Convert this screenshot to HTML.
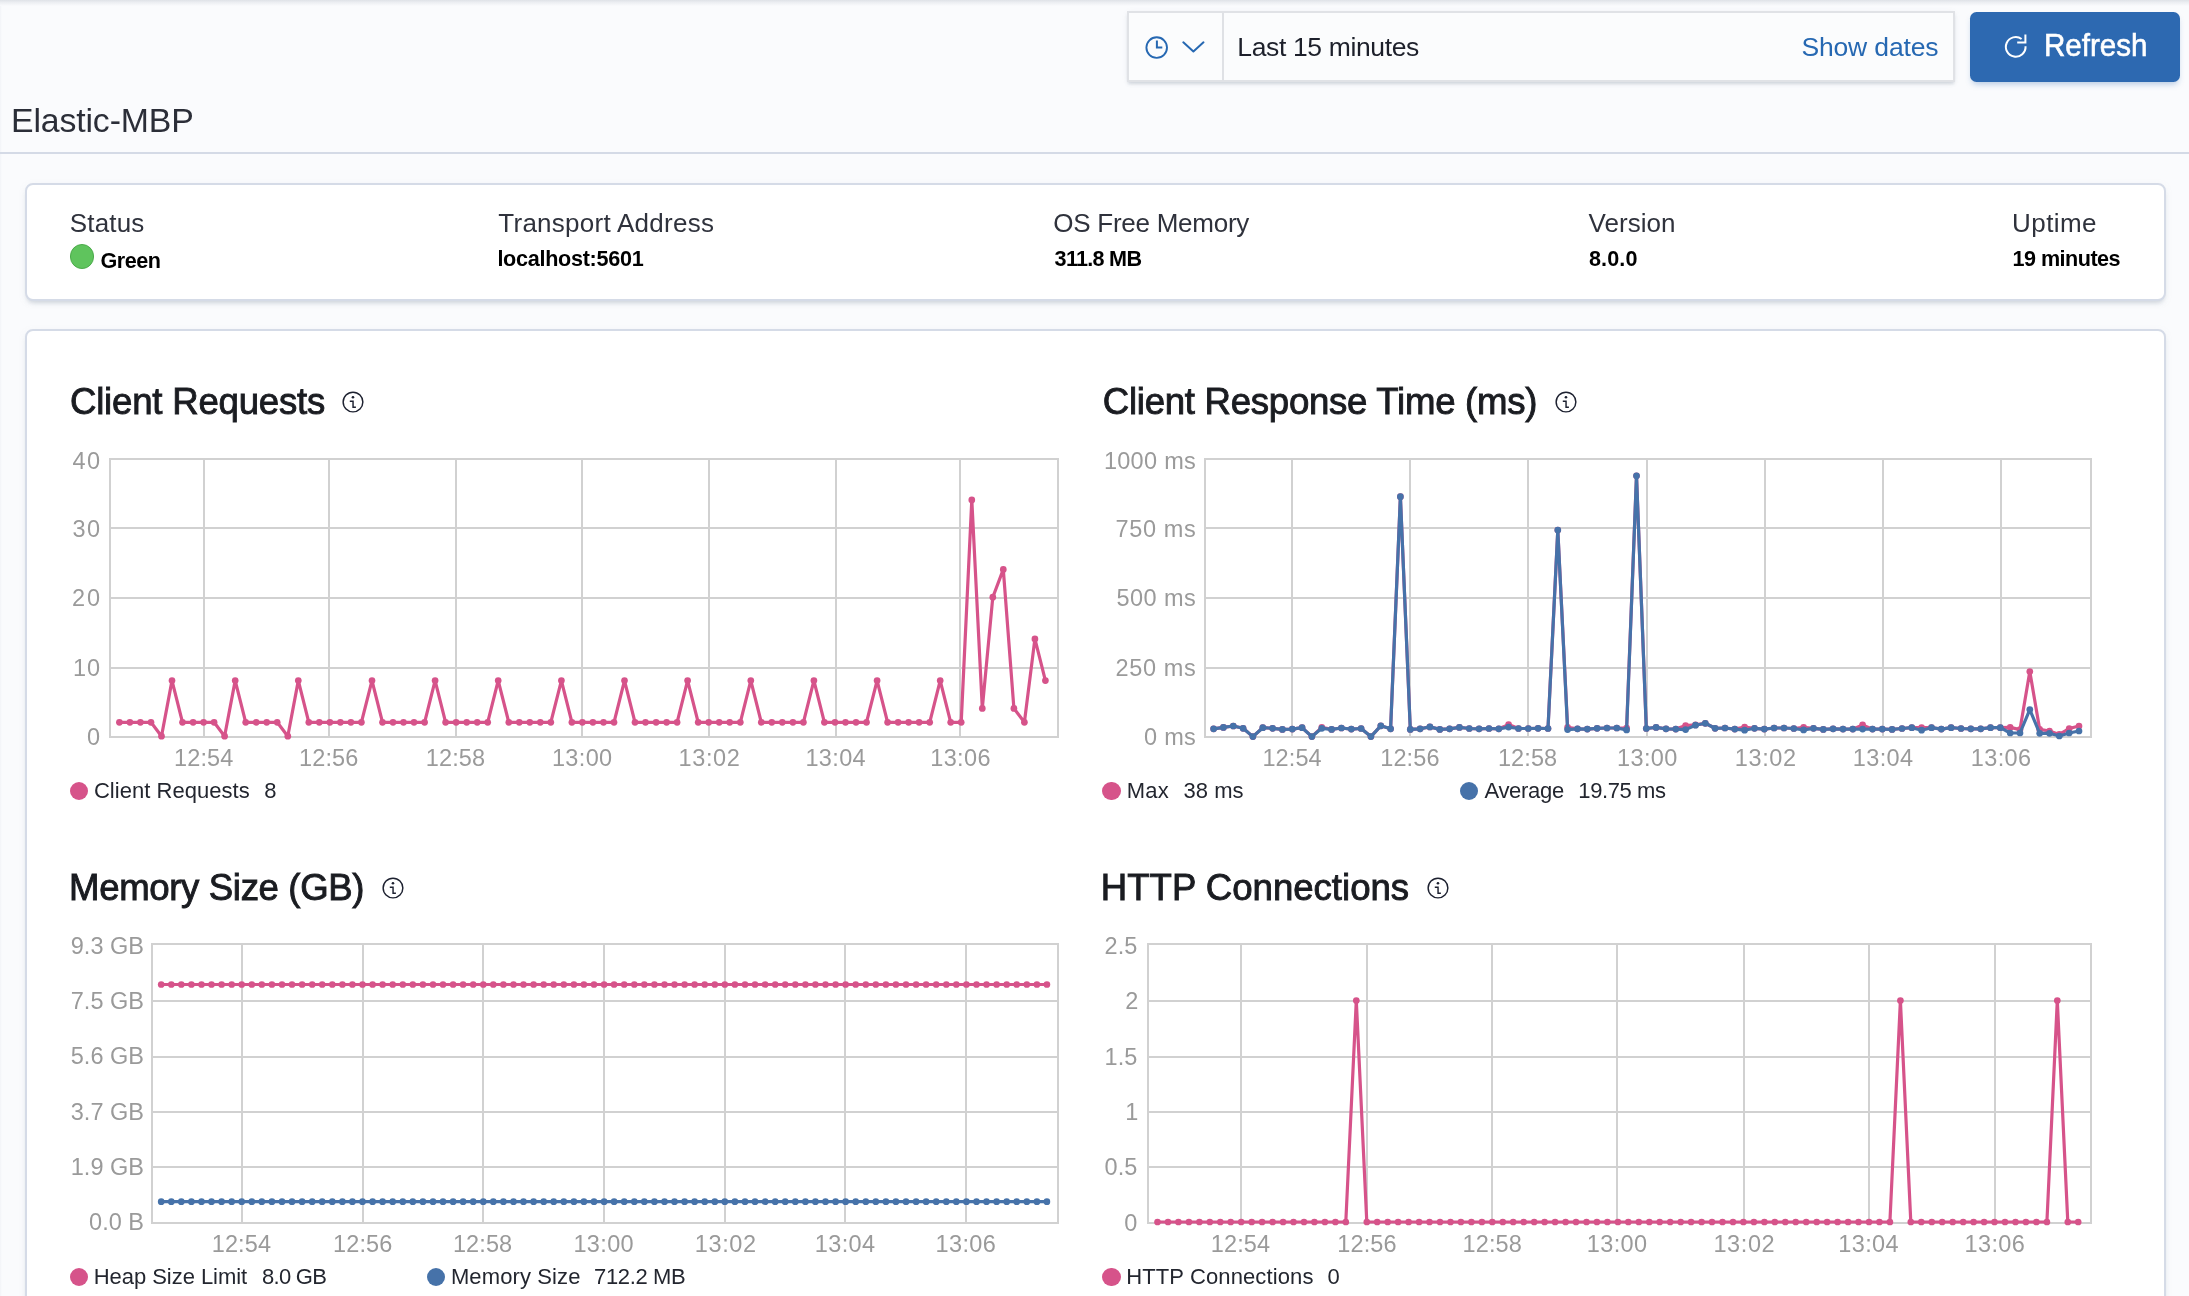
<!DOCTYPE html>
<html lang="en"><head><meta charset="utf-8"><title>Elastic-MBP - Kibana Monitoring</title>
<style>
html,body{margin:0;padding:0;width:2189px;height:1296px;overflow:hidden}
body{width:2189px;height:1296px;overflow:hidden;background:#fafbfd;font-family:"Liberation Sans", sans-serif;position:relative}
.t{position:absolute;white-space:pre;line-height:1;font-family:"Liberation Sans", sans-serif}
.abs{position:absolute}
.dot{position:absolute;border-radius:50%;display:block}
.panel{position:absolute;background:#fff;border:2px solid #d5dbe7;border-radius:8px;box-sizing:border-box;
  box-shadow:0 4px 4px -2px rgba(152,162,179,.35),0 2px 10px -4px rgba(152,162,179,.35)}
#root{position:relative;width:2189px;height:1296px;overflow:hidden;background:#fafbfd}
</style></head><body>
<div id="root">
<div class="abs" style="left:0;top:0;width:2px;height:1296px;background:linear-gradient(90deg,#f2f4f8,#fafbfd)"></div>
<div class="abs" style="left:0;top:0;width:2189px;height:6px;background:linear-gradient(#dfe2e7,#eceef2 40%,#fafbfd)"></div>

<!-- date picker -->
<div class="abs" style="left:1127px;top:11px;width:828px;height:71px;box-sizing:border-box;border:2px solid #e0e2e6;background:#fbfcfd;box-shadow:0 3px 3px -1px rgba(152,162,179,.35),0 1px 6px -2px rgba(152,162,179,.3)"></div>
<div class="abs" style="left:1221.6px;top:12px;width:2px;height:69px;background:#dfe1e5"></div>
<svg class="abs" style="left:1140px;top:30px" width="72" height="36" viewBox="0 0 72 36" fill="none" stroke="#2668b2" stroke-width="2" stroke-linecap="round" stroke-linejoin="round">
<circle cx="16.7" cy="17.6" r="10.3" stroke-width="1.9"/><path d="M16.9 10.6V17.6H22.3" stroke-linecap="butt" stroke-linejoin="miter"/>
<path d="M43.3 12.3L53.4 21.4L63.5 12.3"/></svg>

<!-- refresh button -->
<div class="abs" style="left:1969.6px;top:11.5px;width:210.2px;height:70.6px;border-radius:6.5px;background:#2d69b1;box-shadow:0 4px 6px -2px rgba(45,105,177,.35)"></div>
<svg class="abs" style="left:2000px;top:30px" width="32" height="32" viewBox="0 0 32 32" fill="none" stroke="#fff" stroke-width="2">
<path d="M25.55 16.3A9.85 9.85 0 1 1 21.6 9.0"/><path d="M25.4 4.4V12.5H17.2"/></svg>

<!-- title rule -->
<div class="abs" style="left:0;top:152px;width:2189px;height:2px;background:#d4dae6"></div>

<!-- status panel -->
<div class="panel" style="left:24.8px;top:183px;width:2141.2px;height:118px"></div>
<i class="dot" style="left:69.7px;top:243.8px;width:24.8px;height:24.8px;background:#5fc45d;box-sizing:border-box;border:1.5px solid #4cab4b"></i>

<!-- charts panel -->
<div class="panel" style="left:24.8px;top:328.7px;width:2141.2px;height:1000px"></div>

<svg class="abs" style="left:0;top:0" width="2189" height="1296" viewBox="0 0 2189 1296">
<g stroke="#d1d1d1" stroke-width="2" fill="none" shape-rendering="crispEdges"><line x1="110" x2="1058" y1="528" y2="528"/><line x1="110" x2="1058" y1="598" y2="598"/><line x1="110" x2="1058" y1="668" y2="668"/><line x1="204" x2="204" y1="459" y2="737"/><line x1="329" x2="329" y1="459" y2="737"/><line x1="456" x2="456" y1="459" y2="737"/><line x1="582" x2="582" y1="459" y2="737"/><line x1="709" x2="709" y1="459" y2="737"/><line x1="836" x2="836" y1="459" y2="737"/><line x1="960" x2="960" y1="459" y2="737"/><rect x="110" y="459" width="948" height="278" fill="none"/></g><path d="M119.4 722.3 L129.9 722.3 L140.4 722.3 L151.0 722.3 L161.5 736.2 L172.0 680.6 L182.5 722.3 L193.1 722.3 L203.6 722.3 L214.1 722.3 L224.6 736.2 L235.2 680.6 L245.7 722.3 L256.2 722.3 L266.7 722.3 L277.2 722.3 L287.8 736.2 L298.3 680.6 L308.8 722.3 L319.3 722.3 L329.9 722.3 L340.4 722.3 L350.9 722.3 L361.4 722.3 L372.0 680.6 L382.5 722.3 L393.0 722.3 L403.5 722.3 L414.0 722.3 L424.6 722.3 L435.1 680.6 L445.6 722.3 L456.1 722.3 L466.7 722.3 L477.2 722.3 L487.7 722.3 L498.2 680.6 L508.8 722.3 L519.3 722.3 L529.8 722.3 L540.3 722.3 L550.8 722.3 L561.4 680.6 L571.9 722.3 L582.4 722.3 L592.9 722.3 L603.5 722.3 L614.0 722.3 L624.5 680.6 L635.0 722.3 L645.5 722.3 L656.1 722.3 L666.6 722.3 L677.1 722.3 L687.6 680.6 L698.2 722.3 L708.7 722.3 L719.2 722.3 L729.7 722.3 L740.3 722.3 L750.8 680.6 L761.3 722.3 L771.8 722.3 L782.3 722.3 L792.9 722.3 L803.4 722.3 L813.9 680.6 L824.4 722.3 L835.0 722.3 L845.5 722.3 L856.0 722.3 L866.5 722.3 L877.1 680.6 L887.6 722.3 L898.1 722.3 L908.6 722.3 L919.1 722.3 L929.7 722.3 L940.2 680.6 L950.7 722.3 L961.2 722.3 L971.8 499.9 L982.3 708.4 L992.8 597.2 L1003.3 569.4 L1013.9 708.4 L1024.4 722.3 L1034.9 638.9 L1045.4 680.6" fill="none" stroke="#d6538a" stroke-width="3.2" stroke-linejoin="round" stroke-linecap="round"/><g fill="#d6538a"><circle cx="119.4" cy="722.3" r="3.35"/><circle cx="129.9" cy="722.3" r="3.35"/><circle cx="140.4" cy="722.3" r="3.35"/><circle cx="151.0" cy="722.3" r="3.35"/><circle cx="161.5" cy="736.2" r="3.35"/><circle cx="172.0" cy="680.6" r="3.35"/><circle cx="182.5" cy="722.3" r="3.35"/><circle cx="193.1" cy="722.3" r="3.35"/><circle cx="203.6" cy="722.3" r="3.35"/><circle cx="214.1" cy="722.3" r="3.35"/><circle cx="224.6" cy="736.2" r="3.35"/><circle cx="235.2" cy="680.6" r="3.35"/><circle cx="245.7" cy="722.3" r="3.35"/><circle cx="256.2" cy="722.3" r="3.35"/><circle cx="266.7" cy="722.3" r="3.35"/><circle cx="277.2" cy="722.3" r="3.35"/><circle cx="287.8" cy="736.2" r="3.35"/><circle cx="298.3" cy="680.6" r="3.35"/><circle cx="308.8" cy="722.3" r="3.35"/><circle cx="319.3" cy="722.3" r="3.35"/><circle cx="329.9" cy="722.3" r="3.35"/><circle cx="340.4" cy="722.3" r="3.35"/><circle cx="350.9" cy="722.3" r="3.35"/><circle cx="361.4" cy="722.3" r="3.35"/><circle cx="372.0" cy="680.6" r="3.35"/><circle cx="382.5" cy="722.3" r="3.35"/><circle cx="393.0" cy="722.3" r="3.35"/><circle cx="403.5" cy="722.3" r="3.35"/><circle cx="414.0" cy="722.3" r="3.35"/><circle cx="424.6" cy="722.3" r="3.35"/><circle cx="435.1" cy="680.6" r="3.35"/><circle cx="445.6" cy="722.3" r="3.35"/><circle cx="456.1" cy="722.3" r="3.35"/><circle cx="466.7" cy="722.3" r="3.35"/><circle cx="477.2" cy="722.3" r="3.35"/><circle cx="487.7" cy="722.3" r="3.35"/><circle cx="498.2" cy="680.6" r="3.35"/><circle cx="508.8" cy="722.3" r="3.35"/><circle cx="519.3" cy="722.3" r="3.35"/><circle cx="529.8" cy="722.3" r="3.35"/><circle cx="540.3" cy="722.3" r="3.35"/><circle cx="550.8" cy="722.3" r="3.35"/><circle cx="561.4" cy="680.6" r="3.35"/><circle cx="571.9" cy="722.3" r="3.35"/><circle cx="582.4" cy="722.3" r="3.35"/><circle cx="592.9" cy="722.3" r="3.35"/><circle cx="603.5" cy="722.3" r="3.35"/><circle cx="614.0" cy="722.3" r="3.35"/><circle cx="624.5" cy="680.6" r="3.35"/><circle cx="635.0" cy="722.3" r="3.35"/><circle cx="645.5" cy="722.3" r="3.35"/><circle cx="656.1" cy="722.3" r="3.35"/><circle cx="666.6" cy="722.3" r="3.35"/><circle cx="677.1" cy="722.3" r="3.35"/><circle cx="687.6" cy="680.6" r="3.35"/><circle cx="698.2" cy="722.3" r="3.35"/><circle cx="708.7" cy="722.3" r="3.35"/><circle cx="719.2" cy="722.3" r="3.35"/><circle cx="729.7" cy="722.3" r="3.35"/><circle cx="740.3" cy="722.3" r="3.35"/><circle cx="750.8" cy="680.6" r="3.35"/><circle cx="761.3" cy="722.3" r="3.35"/><circle cx="771.8" cy="722.3" r="3.35"/><circle cx="782.3" cy="722.3" r="3.35"/><circle cx="792.9" cy="722.3" r="3.35"/><circle cx="803.4" cy="722.3" r="3.35"/><circle cx="813.9" cy="680.6" r="3.35"/><circle cx="824.4" cy="722.3" r="3.35"/><circle cx="835.0" cy="722.3" r="3.35"/><circle cx="845.5" cy="722.3" r="3.35"/><circle cx="856.0" cy="722.3" r="3.35"/><circle cx="866.5" cy="722.3" r="3.35"/><circle cx="877.1" cy="680.6" r="3.35"/><circle cx="887.6" cy="722.3" r="3.35"/><circle cx="898.1" cy="722.3" r="3.35"/><circle cx="908.6" cy="722.3" r="3.35"/><circle cx="919.1" cy="722.3" r="3.35"/><circle cx="929.7" cy="722.3" r="3.35"/><circle cx="940.2" cy="680.6" r="3.35"/><circle cx="950.7" cy="722.3" r="3.35"/><circle cx="961.2" cy="722.3" r="3.35"/><circle cx="971.8" cy="499.9" r="3.35"/><circle cx="982.3" cy="708.4" r="3.35"/><circle cx="992.8" cy="597.2" r="3.35"/><circle cx="1003.3" cy="569.4" r="3.35"/><circle cx="1013.9" cy="708.4" r="3.35"/><circle cx="1024.4" cy="722.3" r="3.35"/><circle cx="1034.9" cy="638.9" r="3.35"/><circle cx="1045.4" cy="680.6" r="3.35"/></g><g stroke="#d1d1d1" stroke-width="2" fill="none" shape-rendering="crispEdges"><line x1="1205" x2="2091" y1="528" y2="528"/><line x1="1205" x2="2091" y1="598" y2="598"/><line x1="1205" x2="2091" y1="668" y2="668"/><line x1="1292" x2="1292" y1="459" y2="737"/><line x1="1410" x2="1410" y1="459" y2="737"/><line x1="1528" x2="1528" y1="459" y2="737"/><line x1="1647" x2="1647" y1="459" y2="737"/><line x1="1765" x2="1765" y1="459" y2="737"/><line x1="1883" x2="1883" y1="459" y2="737"/><line x1="2001" x2="2001" y1="459" y2="737"/><rect x="1205" y="459" width="886" height="278" fill="none"/></g><path d="M1213.6 728.8 L1223.4 727.4 L1233.3 726.0 L1243.1 728.3 L1252.9 736.6 L1262.8 727.7 L1272.6 728.3 L1282.4 729.4 L1292.3 729.1 L1302.1 727.7 L1311.9 736.6 L1321.8 727.4 L1331.6 729.4 L1341.4 728.0 L1351.3 729.1 L1361.1 728.5 L1370.9 736.6 L1380.8 725.8 L1390.6 728.8 L1400.4 496.7 L1410.3 729.4 L1420.1 728.8 L1429.9 726.9 L1439.8 729.4 L1449.6 728.8 L1459.4 727.4 L1469.3 728.5 L1479.1 728.8 L1489.0 728.5 L1498.8 728.8 L1508.6 724.6 L1518.5 728.5 L1528.3 728.5 L1538.1 728.3 L1548.0 728.5 L1557.8 530.0 L1567.6 727.4 L1577.5 728.8 L1587.3 729.1 L1597.1 728.3 L1607.0 728.0 L1616.8 728.0 L1626.6 728.0 L1636.5 475.8 L1646.3 728.5 L1656.1 727.4 L1666.0 728.8 L1675.8 729.1 L1685.6 725.5 L1695.5 724.9 L1705.3 723.3 L1715.1 728.3 L1725.0 728.0 L1734.8 729.1 L1744.6 727.1 L1754.5 728.3 L1764.3 729.1 L1774.1 728.0 L1784.0 728.0 L1793.8 728.5 L1803.6 727.4 L1813.5 728.3 L1823.3 729.4 L1833.1 728.8 L1843.0 729.1 L1852.8 729.1 L1862.6 724.9 L1872.5 729.1 L1882.3 729.1 L1892.1 729.4 L1902.0 728.5 L1911.8 727.7 L1921.6 727.7 L1931.5 727.7 L1941.3 729.1 L1951.1 727.7 L1961.0 728.5 L1970.8 728.8 L1980.7 728.8 L1990.5 727.7 L2000.3 727.7 L2010.2 727.4 L2020.0 729.6 L2029.8 671.5 L2039.7 729.4 L2049.5 731.0 L2059.3 734.4 L2069.2 728.5 L2079.0 726.0" fill="none" stroke="#d6538a" stroke-width="3.2" stroke-linejoin="round" stroke-linecap="round"/><g fill="#d6538a"><circle cx="1213.6" cy="728.8" r="3.35"/><circle cx="1223.4" cy="727.4" r="3.35"/><circle cx="1233.3" cy="726.0" r="3.35"/><circle cx="1243.1" cy="728.3" r="3.35"/><circle cx="1252.9" cy="736.6" r="3.35"/><circle cx="1262.8" cy="727.7" r="3.35"/><circle cx="1272.6" cy="728.3" r="3.35"/><circle cx="1282.4" cy="729.4" r="3.35"/><circle cx="1292.3" cy="729.1" r="3.35"/><circle cx="1302.1" cy="727.7" r="3.35"/><circle cx="1311.9" cy="736.6" r="3.35"/><circle cx="1321.8" cy="727.4" r="3.35"/><circle cx="1331.6" cy="729.4" r="3.35"/><circle cx="1341.4" cy="728.0" r="3.35"/><circle cx="1351.3" cy="729.1" r="3.35"/><circle cx="1361.1" cy="728.5" r="3.35"/><circle cx="1370.9" cy="736.6" r="3.35"/><circle cx="1380.8" cy="725.8" r="3.35"/><circle cx="1390.6" cy="728.8" r="3.35"/><circle cx="1400.4" cy="496.7" r="3.35"/><circle cx="1410.3" cy="729.4" r="3.35"/><circle cx="1420.1" cy="728.8" r="3.35"/><circle cx="1429.9" cy="726.9" r="3.35"/><circle cx="1439.8" cy="729.4" r="3.35"/><circle cx="1449.6" cy="728.8" r="3.35"/><circle cx="1459.4" cy="727.4" r="3.35"/><circle cx="1469.3" cy="728.5" r="3.35"/><circle cx="1479.1" cy="728.8" r="3.35"/><circle cx="1489.0" cy="728.5" r="3.35"/><circle cx="1498.8" cy="728.8" r="3.35"/><circle cx="1508.6" cy="724.6" r="3.35"/><circle cx="1518.5" cy="728.5" r="3.35"/><circle cx="1528.3" cy="728.5" r="3.35"/><circle cx="1538.1" cy="728.3" r="3.35"/><circle cx="1548.0" cy="728.5" r="3.35"/><circle cx="1557.8" cy="530.0" r="3.35"/><circle cx="1567.6" cy="727.4" r="3.35"/><circle cx="1577.5" cy="728.8" r="3.35"/><circle cx="1587.3" cy="729.1" r="3.35"/><circle cx="1597.1" cy="728.3" r="3.35"/><circle cx="1607.0" cy="728.0" r="3.35"/><circle cx="1616.8" cy="728.0" r="3.35"/><circle cx="1626.6" cy="728.0" r="3.35"/><circle cx="1636.5" cy="475.8" r="3.35"/><circle cx="1646.3" cy="728.5" r="3.35"/><circle cx="1656.1" cy="727.4" r="3.35"/><circle cx="1666.0" cy="728.8" r="3.35"/><circle cx="1675.8" cy="729.1" r="3.35"/><circle cx="1685.6" cy="725.5" r="3.35"/><circle cx="1695.5" cy="724.9" r="3.35"/><circle cx="1705.3" cy="723.3" r="3.35"/><circle cx="1715.1" cy="728.3" r="3.35"/><circle cx="1725.0" cy="728.0" r="3.35"/><circle cx="1734.8" cy="729.1" r="3.35"/><circle cx="1744.6" cy="727.1" r="3.35"/><circle cx="1754.5" cy="728.3" r="3.35"/><circle cx="1764.3" cy="729.1" r="3.35"/><circle cx="1774.1" cy="728.0" r="3.35"/><circle cx="1784.0" cy="728.0" r="3.35"/><circle cx="1793.8" cy="728.5" r="3.35"/><circle cx="1803.6" cy="727.4" r="3.35"/><circle cx="1813.5" cy="728.3" r="3.35"/><circle cx="1823.3" cy="729.4" r="3.35"/><circle cx="1833.1" cy="728.8" r="3.35"/><circle cx="1843.0" cy="729.1" r="3.35"/><circle cx="1852.8" cy="729.1" r="3.35"/><circle cx="1862.6" cy="724.9" r="3.35"/><circle cx="1872.5" cy="729.1" r="3.35"/><circle cx="1882.3" cy="729.1" r="3.35"/><circle cx="1892.1" cy="729.4" r="3.35"/><circle cx="1902.0" cy="728.5" r="3.35"/><circle cx="1911.8" cy="727.7" r="3.35"/><circle cx="1921.6" cy="727.7" r="3.35"/><circle cx="1931.5" cy="727.7" r="3.35"/><circle cx="1941.3" cy="729.1" r="3.35"/><circle cx="1951.1" cy="727.7" r="3.35"/><circle cx="1961.0" cy="728.5" r="3.35"/><circle cx="1970.8" cy="728.8" r="3.35"/><circle cx="1980.7" cy="728.8" r="3.35"/><circle cx="1990.5" cy="727.7" r="3.35"/><circle cx="2000.3" cy="727.7" r="3.35"/><circle cx="2010.2" cy="727.4" r="3.35"/><circle cx="2020.0" cy="729.6" r="3.35"/><circle cx="2029.8" cy="671.5" r="3.35"/><circle cx="2039.7" cy="729.4" r="3.35"/><circle cx="2049.5" cy="731.0" r="3.35"/><circle cx="2059.3" cy="734.4" r="3.35"/><circle cx="2069.2" cy="728.5" r="3.35"/><circle cx="2079.0" cy="726.0" r="3.35"/></g><path d="M1213.6 728.8 L1223.4 727.4 L1233.3 726.0 L1243.1 728.3 L1252.9 736.6 L1262.8 727.7 L1272.6 728.3 L1282.4 729.4 L1292.3 729.1 L1302.1 727.7 L1311.9 736.6 L1321.8 728.3 L1331.6 729.4 L1341.4 728.0 L1351.3 729.1 L1361.1 728.5 L1370.9 736.6 L1380.8 725.8 L1390.6 728.8 L1400.4 496.7 L1410.3 729.4 L1420.1 728.8 L1429.9 726.9 L1439.8 729.4 L1449.6 728.8 L1459.4 727.4 L1469.3 728.5 L1479.1 728.8 L1489.0 728.5 L1498.8 728.8 L1508.6 727.1 L1518.5 728.5 L1528.3 728.5 L1538.1 728.3 L1548.0 728.5 L1557.8 530.0 L1567.6 729.6 L1577.5 728.8 L1587.3 729.1 L1597.1 728.3 L1607.0 728.0 L1616.8 728.0 L1626.6 729.9 L1636.5 475.8 L1646.3 728.5 L1656.1 727.4 L1666.0 728.8 L1675.8 729.1 L1685.6 729.6 L1695.5 725.2 L1705.3 723.3 L1715.1 728.3 L1725.0 728.0 L1734.8 729.1 L1744.6 730.2 L1754.5 728.3 L1764.3 729.1 L1774.1 728.0 L1784.0 728.0 L1793.8 728.5 L1803.6 729.9 L1813.5 728.3 L1823.3 729.4 L1833.1 728.8 L1843.0 729.1 L1852.8 729.1 L1862.6 729.1 L1872.5 729.1 L1882.3 729.1 L1892.1 729.4 L1902.0 728.5 L1911.8 727.7 L1921.6 730.2 L1931.5 727.7 L1941.3 729.1 L1951.1 727.7 L1961.0 728.5 L1970.8 728.8 L1980.7 728.8 L1990.5 727.7 L2000.3 727.7 L2010.2 733.0 L2020.0 733.0 L2029.8 709.6 L2039.7 733.3 L2049.5 733.3 L2059.3 736.0 L2069.2 733.0 L2079.0 731.0" fill="none" stroke="#4672a9" stroke-width="3.2" stroke-linejoin="round" stroke-linecap="round"/><g fill="#4672a9"><circle cx="1213.6" cy="728.8" r="3.35"/><circle cx="1223.4" cy="727.4" r="3.35"/><circle cx="1233.3" cy="726.0" r="3.35"/><circle cx="1243.1" cy="728.3" r="3.35"/><circle cx="1252.9" cy="736.6" r="3.35"/><circle cx="1262.8" cy="727.7" r="3.35"/><circle cx="1272.6" cy="728.3" r="3.35"/><circle cx="1282.4" cy="729.4" r="3.35"/><circle cx="1292.3" cy="729.1" r="3.35"/><circle cx="1302.1" cy="727.7" r="3.35"/><circle cx="1311.9" cy="736.6" r="3.35"/><circle cx="1321.8" cy="728.3" r="3.35"/><circle cx="1331.6" cy="729.4" r="3.35"/><circle cx="1341.4" cy="728.0" r="3.35"/><circle cx="1351.3" cy="729.1" r="3.35"/><circle cx="1361.1" cy="728.5" r="3.35"/><circle cx="1370.9" cy="736.6" r="3.35"/><circle cx="1380.8" cy="725.8" r="3.35"/><circle cx="1390.6" cy="728.8" r="3.35"/><circle cx="1400.4" cy="496.7" r="3.35"/><circle cx="1410.3" cy="729.4" r="3.35"/><circle cx="1420.1" cy="728.8" r="3.35"/><circle cx="1429.9" cy="726.9" r="3.35"/><circle cx="1439.8" cy="729.4" r="3.35"/><circle cx="1449.6" cy="728.8" r="3.35"/><circle cx="1459.4" cy="727.4" r="3.35"/><circle cx="1469.3" cy="728.5" r="3.35"/><circle cx="1479.1" cy="728.8" r="3.35"/><circle cx="1489.0" cy="728.5" r="3.35"/><circle cx="1498.8" cy="728.8" r="3.35"/><circle cx="1508.6" cy="727.1" r="3.35"/><circle cx="1518.5" cy="728.5" r="3.35"/><circle cx="1528.3" cy="728.5" r="3.35"/><circle cx="1538.1" cy="728.3" r="3.35"/><circle cx="1548.0" cy="728.5" r="3.35"/><circle cx="1557.8" cy="530.0" r="3.35"/><circle cx="1567.6" cy="729.6" r="3.35"/><circle cx="1577.5" cy="728.8" r="3.35"/><circle cx="1587.3" cy="729.1" r="3.35"/><circle cx="1597.1" cy="728.3" r="3.35"/><circle cx="1607.0" cy="728.0" r="3.35"/><circle cx="1616.8" cy="728.0" r="3.35"/><circle cx="1626.6" cy="729.9" r="3.35"/><circle cx="1636.5" cy="475.8" r="3.35"/><circle cx="1646.3" cy="728.5" r="3.35"/><circle cx="1656.1" cy="727.4" r="3.35"/><circle cx="1666.0" cy="728.8" r="3.35"/><circle cx="1675.8" cy="729.1" r="3.35"/><circle cx="1685.6" cy="729.6" r="3.35"/><circle cx="1695.5" cy="725.2" r="3.35"/><circle cx="1705.3" cy="723.3" r="3.35"/><circle cx="1715.1" cy="728.3" r="3.35"/><circle cx="1725.0" cy="728.0" r="3.35"/><circle cx="1734.8" cy="729.1" r="3.35"/><circle cx="1744.6" cy="730.2" r="3.35"/><circle cx="1754.5" cy="728.3" r="3.35"/><circle cx="1764.3" cy="729.1" r="3.35"/><circle cx="1774.1" cy="728.0" r="3.35"/><circle cx="1784.0" cy="728.0" r="3.35"/><circle cx="1793.8" cy="728.5" r="3.35"/><circle cx="1803.6" cy="729.9" r="3.35"/><circle cx="1813.5" cy="728.3" r="3.35"/><circle cx="1823.3" cy="729.4" r="3.35"/><circle cx="1833.1" cy="728.8" r="3.35"/><circle cx="1843.0" cy="729.1" r="3.35"/><circle cx="1852.8" cy="729.1" r="3.35"/><circle cx="1862.6" cy="729.1" r="3.35"/><circle cx="1872.5" cy="729.1" r="3.35"/><circle cx="1882.3" cy="729.1" r="3.35"/><circle cx="1892.1" cy="729.4" r="3.35"/><circle cx="1902.0" cy="728.5" r="3.35"/><circle cx="1911.8" cy="727.7" r="3.35"/><circle cx="1921.6" cy="730.2" r="3.35"/><circle cx="1931.5" cy="727.7" r="3.35"/><circle cx="1941.3" cy="729.1" r="3.35"/><circle cx="1951.1" cy="727.7" r="3.35"/><circle cx="1961.0" cy="728.5" r="3.35"/><circle cx="1970.8" cy="728.8" r="3.35"/><circle cx="1980.7" cy="728.8" r="3.35"/><circle cx="1990.5" cy="727.7" r="3.35"/><circle cx="2000.3" cy="727.7" r="3.35"/><circle cx="2010.2" cy="733.0" r="3.35"/><circle cx="2020.0" cy="733.0" r="3.35"/><circle cx="2029.8" cy="709.6" r="3.35"/><circle cx="2039.7" cy="733.3" r="3.35"/><circle cx="2049.5" cy="733.3" r="3.35"/><circle cx="2059.3" cy="736.0" r="3.35"/><circle cx="2069.2" cy="733.0" r="3.35"/><circle cx="2079.0" cy="731.0" r="3.35"/></g><g stroke="#d1d1d1" stroke-width="2" fill="none" shape-rendering="crispEdges"><line x1="152" x2="1058" y1="1001" y2="1001"/><line x1="152" x2="1058" y1="1057" y2="1057"/><line x1="152" x2="1058" y1="1112" y2="1112"/><line x1="152" x2="1058" y1="1167" y2="1167"/><line x1="242" x2="242" y1="944" y2="1223"/><line x1="363" x2="363" y1="944" y2="1223"/><line x1="483" x2="483" y1="944" y2="1223"/><line x1="604" x2="604" y1="944" y2="1223"/><line x1="725" x2="725" y1="944" y2="1223"/><line x1="845" x2="845" y1="944" y2="1223"/><line x1="966" x2="966" y1="944" y2="1223"/><rect x="152" y="944" width="906" height="279" fill="none"/></g><path d="M161.2 984.5 L171.3 984.5 L181.3 984.5 L191.4 984.5 L201.5 984.5 L211.5 984.5 L221.6 984.5 L231.7 984.5 L241.7 984.5 L251.8 984.5 L261.8 984.5 L271.9 984.5 L282.0 984.5 L292.0 984.5 L302.1 984.5 L312.2 984.5 L322.2 984.5 L332.3 984.5 L342.4 984.5 L352.4 984.5 L362.5 984.5 L372.6 984.5 L382.6 984.5 L392.7 984.5 L402.8 984.5 L412.8 984.5 L422.9 984.5 L433.0 984.5 L443.0 984.5 L453.1 984.5 L463.1 984.5 L473.2 984.5 L483.3 984.5 L493.3 984.5 L503.4 984.5 L513.5 984.5 L523.5 984.5 L533.6 984.5 L543.7 984.5 L553.7 984.5 L563.8 984.5 L573.9 984.5 L583.9 984.5 L594.0 984.5 L604.1 984.5 L614.1 984.5 L624.2 984.5 L634.3 984.5 L644.3 984.5 L654.4 984.5 L664.5 984.5 L674.5 984.5 L684.6 984.5 L694.6 984.5 L704.7 984.5 L714.8 984.5 L724.8 984.5 L734.9 984.5 L745.0 984.5 L755.0 984.5 L765.1 984.5 L775.2 984.5 L785.2 984.5 L795.3 984.5 L805.4 984.5 L815.4 984.5 L825.5 984.5 L835.6 984.5 L845.6 984.5 L855.7 984.5 L865.8 984.5 L875.8 984.5 L885.9 984.5 L895.9 984.5 L906.0 984.5 L916.1 984.5 L926.1 984.5 L936.2 984.5 L946.3 984.5 L956.3 984.5 L966.4 984.5 L976.5 984.5 L986.5 984.5 L996.6 984.5 L1006.7 984.5 L1016.7 984.5 L1026.8 984.5 L1036.9 984.5 L1046.9 984.5" fill="none" stroke="#d6538a" stroke-width="3.2" stroke-linejoin="round" stroke-linecap="round"/><g fill="#d6538a"><circle cx="161.2" cy="984.5" r="3.35"/><circle cx="171.3" cy="984.5" r="3.35"/><circle cx="181.3" cy="984.5" r="3.35"/><circle cx="191.4" cy="984.5" r="3.35"/><circle cx="201.5" cy="984.5" r="3.35"/><circle cx="211.5" cy="984.5" r="3.35"/><circle cx="221.6" cy="984.5" r="3.35"/><circle cx="231.7" cy="984.5" r="3.35"/><circle cx="241.7" cy="984.5" r="3.35"/><circle cx="251.8" cy="984.5" r="3.35"/><circle cx="261.8" cy="984.5" r="3.35"/><circle cx="271.9" cy="984.5" r="3.35"/><circle cx="282.0" cy="984.5" r="3.35"/><circle cx="292.0" cy="984.5" r="3.35"/><circle cx="302.1" cy="984.5" r="3.35"/><circle cx="312.2" cy="984.5" r="3.35"/><circle cx="322.2" cy="984.5" r="3.35"/><circle cx="332.3" cy="984.5" r="3.35"/><circle cx="342.4" cy="984.5" r="3.35"/><circle cx="352.4" cy="984.5" r="3.35"/><circle cx="362.5" cy="984.5" r="3.35"/><circle cx="372.6" cy="984.5" r="3.35"/><circle cx="382.6" cy="984.5" r="3.35"/><circle cx="392.7" cy="984.5" r="3.35"/><circle cx="402.8" cy="984.5" r="3.35"/><circle cx="412.8" cy="984.5" r="3.35"/><circle cx="422.9" cy="984.5" r="3.35"/><circle cx="433.0" cy="984.5" r="3.35"/><circle cx="443.0" cy="984.5" r="3.35"/><circle cx="453.1" cy="984.5" r="3.35"/><circle cx="463.1" cy="984.5" r="3.35"/><circle cx="473.2" cy="984.5" r="3.35"/><circle cx="483.3" cy="984.5" r="3.35"/><circle cx="493.3" cy="984.5" r="3.35"/><circle cx="503.4" cy="984.5" r="3.35"/><circle cx="513.5" cy="984.5" r="3.35"/><circle cx="523.5" cy="984.5" r="3.35"/><circle cx="533.6" cy="984.5" r="3.35"/><circle cx="543.7" cy="984.5" r="3.35"/><circle cx="553.7" cy="984.5" r="3.35"/><circle cx="563.8" cy="984.5" r="3.35"/><circle cx="573.9" cy="984.5" r="3.35"/><circle cx="583.9" cy="984.5" r="3.35"/><circle cx="594.0" cy="984.5" r="3.35"/><circle cx="604.1" cy="984.5" r="3.35"/><circle cx="614.1" cy="984.5" r="3.35"/><circle cx="624.2" cy="984.5" r="3.35"/><circle cx="634.3" cy="984.5" r="3.35"/><circle cx="644.3" cy="984.5" r="3.35"/><circle cx="654.4" cy="984.5" r="3.35"/><circle cx="664.5" cy="984.5" r="3.35"/><circle cx="674.5" cy="984.5" r="3.35"/><circle cx="684.6" cy="984.5" r="3.35"/><circle cx="694.6" cy="984.5" r="3.35"/><circle cx="704.7" cy="984.5" r="3.35"/><circle cx="714.8" cy="984.5" r="3.35"/><circle cx="724.8" cy="984.5" r="3.35"/><circle cx="734.9" cy="984.5" r="3.35"/><circle cx="745.0" cy="984.5" r="3.35"/><circle cx="755.0" cy="984.5" r="3.35"/><circle cx="765.1" cy="984.5" r="3.35"/><circle cx="775.2" cy="984.5" r="3.35"/><circle cx="785.2" cy="984.5" r="3.35"/><circle cx="795.3" cy="984.5" r="3.35"/><circle cx="805.4" cy="984.5" r="3.35"/><circle cx="815.4" cy="984.5" r="3.35"/><circle cx="825.5" cy="984.5" r="3.35"/><circle cx="835.6" cy="984.5" r="3.35"/><circle cx="845.6" cy="984.5" r="3.35"/><circle cx="855.7" cy="984.5" r="3.35"/><circle cx="865.8" cy="984.5" r="3.35"/><circle cx="875.8" cy="984.5" r="3.35"/><circle cx="885.9" cy="984.5" r="3.35"/><circle cx="895.9" cy="984.5" r="3.35"/><circle cx="906.0" cy="984.5" r="3.35"/><circle cx="916.1" cy="984.5" r="3.35"/><circle cx="926.1" cy="984.5" r="3.35"/><circle cx="936.2" cy="984.5" r="3.35"/><circle cx="946.3" cy="984.5" r="3.35"/><circle cx="956.3" cy="984.5" r="3.35"/><circle cx="966.4" cy="984.5" r="3.35"/><circle cx="976.5" cy="984.5" r="3.35"/><circle cx="986.5" cy="984.5" r="3.35"/><circle cx="996.6" cy="984.5" r="3.35"/><circle cx="1006.7" cy="984.5" r="3.35"/><circle cx="1016.7" cy="984.5" r="3.35"/><circle cx="1026.8" cy="984.5" r="3.35"/><circle cx="1036.9" cy="984.5" r="3.35"/><circle cx="1046.9" cy="984.5" r="3.35"/></g><path d="M161.2 1201.7 L171.3 1201.7 L181.3 1201.7 L191.4 1201.7 L201.5 1201.7 L211.5 1201.7 L221.6 1201.7 L231.7 1201.7 L241.7 1201.7 L251.8 1201.7 L261.8 1201.7 L271.9 1201.7 L282.0 1201.7 L292.0 1201.7 L302.1 1201.7 L312.2 1201.7 L322.2 1201.7 L332.3 1201.7 L342.4 1201.7 L352.4 1201.7 L362.5 1201.7 L372.6 1201.7 L382.6 1201.7 L392.7 1201.7 L402.8 1201.7 L412.8 1201.7 L422.9 1201.7 L433.0 1201.7 L443.0 1201.7 L453.1 1201.7 L463.1 1201.7 L473.2 1201.7 L483.3 1201.7 L493.3 1201.7 L503.4 1201.7 L513.5 1201.7 L523.5 1201.7 L533.6 1201.7 L543.7 1201.7 L553.7 1201.7 L563.8 1201.7 L573.9 1201.7 L583.9 1201.7 L594.0 1201.7 L604.1 1201.7 L614.1 1201.7 L624.2 1201.7 L634.3 1201.7 L644.3 1201.7 L654.4 1201.7 L664.5 1201.7 L674.5 1201.7 L684.6 1201.7 L694.6 1201.7 L704.7 1201.7 L714.8 1201.7 L724.8 1201.7 L734.9 1201.7 L745.0 1201.7 L755.0 1201.7 L765.1 1201.7 L775.2 1201.7 L785.2 1201.7 L795.3 1201.7 L805.4 1201.7 L815.4 1201.7 L825.5 1201.7 L835.6 1201.7 L845.6 1201.7 L855.7 1201.7 L865.8 1201.7 L875.8 1201.7 L885.9 1201.7 L895.9 1201.7 L906.0 1201.7 L916.1 1201.7 L926.1 1201.7 L936.2 1201.7 L946.3 1201.7 L956.3 1201.7 L966.4 1201.7 L976.5 1201.7 L986.5 1201.7 L996.6 1201.7 L1006.7 1201.7 L1016.7 1201.7 L1026.8 1201.7 L1036.9 1201.7 L1046.9 1201.7" fill="none" stroke="#4672a9" stroke-width="3.2" stroke-linejoin="round" stroke-linecap="round"/><g fill="#4672a9"><circle cx="161.2" cy="1201.7" r="3.35"/><circle cx="171.3" cy="1201.7" r="3.35"/><circle cx="181.3" cy="1201.7" r="3.35"/><circle cx="191.4" cy="1201.7" r="3.35"/><circle cx="201.5" cy="1201.7" r="3.35"/><circle cx="211.5" cy="1201.7" r="3.35"/><circle cx="221.6" cy="1201.7" r="3.35"/><circle cx="231.7" cy="1201.7" r="3.35"/><circle cx="241.7" cy="1201.7" r="3.35"/><circle cx="251.8" cy="1201.7" r="3.35"/><circle cx="261.8" cy="1201.7" r="3.35"/><circle cx="271.9" cy="1201.7" r="3.35"/><circle cx="282.0" cy="1201.7" r="3.35"/><circle cx="292.0" cy="1201.7" r="3.35"/><circle cx="302.1" cy="1201.7" r="3.35"/><circle cx="312.2" cy="1201.7" r="3.35"/><circle cx="322.2" cy="1201.7" r="3.35"/><circle cx="332.3" cy="1201.7" r="3.35"/><circle cx="342.4" cy="1201.7" r="3.35"/><circle cx="352.4" cy="1201.7" r="3.35"/><circle cx="362.5" cy="1201.7" r="3.35"/><circle cx="372.6" cy="1201.7" r="3.35"/><circle cx="382.6" cy="1201.7" r="3.35"/><circle cx="392.7" cy="1201.7" r="3.35"/><circle cx="402.8" cy="1201.7" r="3.35"/><circle cx="412.8" cy="1201.7" r="3.35"/><circle cx="422.9" cy="1201.7" r="3.35"/><circle cx="433.0" cy="1201.7" r="3.35"/><circle cx="443.0" cy="1201.7" r="3.35"/><circle cx="453.1" cy="1201.7" r="3.35"/><circle cx="463.1" cy="1201.7" r="3.35"/><circle cx="473.2" cy="1201.7" r="3.35"/><circle cx="483.3" cy="1201.7" r="3.35"/><circle cx="493.3" cy="1201.7" r="3.35"/><circle cx="503.4" cy="1201.7" r="3.35"/><circle cx="513.5" cy="1201.7" r="3.35"/><circle cx="523.5" cy="1201.7" r="3.35"/><circle cx="533.6" cy="1201.7" r="3.35"/><circle cx="543.7" cy="1201.7" r="3.35"/><circle cx="553.7" cy="1201.7" r="3.35"/><circle cx="563.8" cy="1201.7" r="3.35"/><circle cx="573.9" cy="1201.7" r="3.35"/><circle cx="583.9" cy="1201.7" r="3.35"/><circle cx="594.0" cy="1201.7" r="3.35"/><circle cx="604.1" cy="1201.7" r="3.35"/><circle cx="614.1" cy="1201.7" r="3.35"/><circle cx="624.2" cy="1201.7" r="3.35"/><circle cx="634.3" cy="1201.7" r="3.35"/><circle cx="644.3" cy="1201.7" r="3.35"/><circle cx="654.4" cy="1201.7" r="3.35"/><circle cx="664.5" cy="1201.7" r="3.35"/><circle cx="674.5" cy="1201.7" r="3.35"/><circle cx="684.6" cy="1201.7" r="3.35"/><circle cx="694.6" cy="1201.7" r="3.35"/><circle cx="704.7" cy="1201.7" r="3.35"/><circle cx="714.8" cy="1201.7" r="3.35"/><circle cx="724.8" cy="1201.7" r="3.35"/><circle cx="734.9" cy="1201.7" r="3.35"/><circle cx="745.0" cy="1201.7" r="3.35"/><circle cx="755.0" cy="1201.7" r="3.35"/><circle cx="765.1" cy="1201.7" r="3.35"/><circle cx="775.2" cy="1201.7" r="3.35"/><circle cx="785.2" cy="1201.7" r="3.35"/><circle cx="795.3" cy="1201.7" r="3.35"/><circle cx="805.4" cy="1201.7" r="3.35"/><circle cx="815.4" cy="1201.7" r="3.35"/><circle cx="825.5" cy="1201.7" r="3.35"/><circle cx="835.6" cy="1201.7" r="3.35"/><circle cx="845.6" cy="1201.7" r="3.35"/><circle cx="855.7" cy="1201.7" r="3.35"/><circle cx="865.8" cy="1201.7" r="3.35"/><circle cx="875.8" cy="1201.7" r="3.35"/><circle cx="885.9" cy="1201.7" r="3.35"/><circle cx="895.9" cy="1201.7" r="3.35"/><circle cx="906.0" cy="1201.7" r="3.35"/><circle cx="916.1" cy="1201.7" r="3.35"/><circle cx="926.1" cy="1201.7" r="3.35"/><circle cx="936.2" cy="1201.7" r="3.35"/><circle cx="946.3" cy="1201.7" r="3.35"/><circle cx="956.3" cy="1201.7" r="3.35"/><circle cx="966.4" cy="1201.7" r="3.35"/><circle cx="976.5" cy="1201.7" r="3.35"/><circle cx="986.5" cy="1201.7" r="3.35"/><circle cx="996.6" cy="1201.7" r="3.35"/><circle cx="1006.7" cy="1201.7" r="3.35"/><circle cx="1016.7" cy="1201.7" r="3.35"/><circle cx="1026.8" cy="1201.7" r="3.35"/><circle cx="1036.9" cy="1201.7" r="3.35"/><circle cx="1046.9" cy="1201.7" r="3.35"/></g><g stroke="#d1d1d1" stroke-width="2" fill="none" shape-rendering="crispEdges"><line x1="1148" x2="2091" y1="1001" y2="1001"/><line x1="1148" x2="2091" y1="1057" y2="1057"/><line x1="1148" x2="2091" y1="1112" y2="1112"/><line x1="1148" x2="2091" y1="1167" y2="1167"/><line x1="1241" x2="1241" y1="944" y2="1223"/><line x1="1367" x2="1367" y1="944" y2="1223"/><line x1="1492" x2="1492" y1="944" y2="1223"/><line x1="1617" x2="1617" y1="944" y2="1223"/><line x1="1744" x2="1744" y1="944" y2="1223"/><line x1="1869" x2="1869" y1="944" y2="1223"/><line x1="1995" x2="1995" y1="944" y2="1223"/><rect x="1148" y="944" width="943" height="279" fill="none"/></g><path d="M1157.5 1222.0 L1168.0 1222.0 L1178.4 1222.0 L1188.9 1222.0 L1199.4 1222.0 L1209.8 1222.0 L1220.3 1222.0 L1230.7 1222.0 L1241.2 1222.0 L1251.7 1222.0 L1262.1 1222.0 L1272.6 1222.0 L1283.1 1222.0 L1293.5 1222.0 L1304.0 1222.0 L1314.4 1222.0 L1324.9 1222.0 L1335.4 1222.0 L1345.8 1222.0 L1356.3 1000.6 L1366.8 1222.0 L1377.2 1222.0 L1387.7 1222.0 L1398.1 1222.0 L1408.6 1222.0 L1419.1 1222.0 L1429.5 1222.0 L1440.0 1222.0 L1450.5 1222.0 L1460.9 1222.0 L1471.4 1222.0 L1481.9 1222.0 L1492.3 1222.0 L1502.8 1222.0 L1513.2 1222.0 L1523.7 1222.0 L1534.2 1222.0 L1544.6 1222.0 L1555.1 1222.0 L1565.6 1222.0 L1576.0 1222.0 L1586.5 1222.0 L1596.9 1222.0 L1607.4 1222.0 L1617.9 1222.0 L1628.3 1222.0 L1638.8 1222.0 L1649.3 1222.0 L1659.7 1222.0 L1670.2 1222.0 L1680.7 1222.0 L1691.1 1222.0 L1701.6 1222.0 L1712.0 1222.0 L1722.5 1222.0 L1733.0 1222.0 L1743.4 1222.0 L1753.9 1222.0 L1764.4 1222.0 L1774.8 1222.0 L1785.3 1222.0 L1795.7 1222.0 L1806.2 1222.0 L1816.7 1222.0 L1827.1 1222.0 L1837.6 1222.0 L1848.1 1222.0 L1858.5 1222.0 L1869.0 1222.0 L1879.4 1222.0 L1889.9 1222.0 L1900.4 1000.6 L1910.8 1222.0 L1921.3 1222.0 L1931.8 1222.0 L1942.2 1222.0 L1952.7 1222.0 L1963.2 1222.0 L1973.6 1222.0 L1984.1 1222.0 L1994.5 1222.0 L2005.0 1222.0 L2015.5 1222.0 L2025.9 1222.0 L2036.4 1222.0 L2046.9 1222.0 L2057.3 1000.6 L2067.8 1222.0 L2078.2 1222.0" fill="none" stroke="#d6538a" stroke-width="3.2" stroke-linejoin="round" stroke-linecap="round"/><g fill="#d6538a"><circle cx="1157.5" cy="1222.0" r="3.35"/><circle cx="1168.0" cy="1222.0" r="3.35"/><circle cx="1178.4" cy="1222.0" r="3.35"/><circle cx="1188.9" cy="1222.0" r="3.35"/><circle cx="1199.4" cy="1222.0" r="3.35"/><circle cx="1209.8" cy="1222.0" r="3.35"/><circle cx="1220.3" cy="1222.0" r="3.35"/><circle cx="1230.7" cy="1222.0" r="3.35"/><circle cx="1241.2" cy="1222.0" r="3.35"/><circle cx="1251.7" cy="1222.0" r="3.35"/><circle cx="1262.1" cy="1222.0" r="3.35"/><circle cx="1272.6" cy="1222.0" r="3.35"/><circle cx="1283.1" cy="1222.0" r="3.35"/><circle cx="1293.5" cy="1222.0" r="3.35"/><circle cx="1304.0" cy="1222.0" r="3.35"/><circle cx="1314.4" cy="1222.0" r="3.35"/><circle cx="1324.9" cy="1222.0" r="3.35"/><circle cx="1335.4" cy="1222.0" r="3.35"/><circle cx="1345.8" cy="1222.0" r="3.35"/><circle cx="1356.3" cy="1000.6" r="3.35"/><circle cx="1366.8" cy="1222.0" r="3.35"/><circle cx="1377.2" cy="1222.0" r="3.35"/><circle cx="1387.7" cy="1222.0" r="3.35"/><circle cx="1398.1" cy="1222.0" r="3.35"/><circle cx="1408.6" cy="1222.0" r="3.35"/><circle cx="1419.1" cy="1222.0" r="3.35"/><circle cx="1429.5" cy="1222.0" r="3.35"/><circle cx="1440.0" cy="1222.0" r="3.35"/><circle cx="1450.5" cy="1222.0" r="3.35"/><circle cx="1460.9" cy="1222.0" r="3.35"/><circle cx="1471.4" cy="1222.0" r="3.35"/><circle cx="1481.9" cy="1222.0" r="3.35"/><circle cx="1492.3" cy="1222.0" r="3.35"/><circle cx="1502.8" cy="1222.0" r="3.35"/><circle cx="1513.2" cy="1222.0" r="3.35"/><circle cx="1523.7" cy="1222.0" r="3.35"/><circle cx="1534.2" cy="1222.0" r="3.35"/><circle cx="1544.6" cy="1222.0" r="3.35"/><circle cx="1555.1" cy="1222.0" r="3.35"/><circle cx="1565.6" cy="1222.0" r="3.35"/><circle cx="1576.0" cy="1222.0" r="3.35"/><circle cx="1586.5" cy="1222.0" r="3.35"/><circle cx="1596.9" cy="1222.0" r="3.35"/><circle cx="1607.4" cy="1222.0" r="3.35"/><circle cx="1617.9" cy="1222.0" r="3.35"/><circle cx="1628.3" cy="1222.0" r="3.35"/><circle cx="1638.8" cy="1222.0" r="3.35"/><circle cx="1649.3" cy="1222.0" r="3.35"/><circle cx="1659.7" cy="1222.0" r="3.35"/><circle cx="1670.2" cy="1222.0" r="3.35"/><circle cx="1680.7" cy="1222.0" r="3.35"/><circle cx="1691.1" cy="1222.0" r="3.35"/><circle cx="1701.6" cy="1222.0" r="3.35"/><circle cx="1712.0" cy="1222.0" r="3.35"/><circle cx="1722.5" cy="1222.0" r="3.35"/><circle cx="1733.0" cy="1222.0" r="3.35"/><circle cx="1743.4" cy="1222.0" r="3.35"/><circle cx="1753.9" cy="1222.0" r="3.35"/><circle cx="1764.4" cy="1222.0" r="3.35"/><circle cx="1774.8" cy="1222.0" r="3.35"/><circle cx="1785.3" cy="1222.0" r="3.35"/><circle cx="1795.7" cy="1222.0" r="3.35"/><circle cx="1806.2" cy="1222.0" r="3.35"/><circle cx="1816.7" cy="1222.0" r="3.35"/><circle cx="1827.1" cy="1222.0" r="3.35"/><circle cx="1837.6" cy="1222.0" r="3.35"/><circle cx="1848.1" cy="1222.0" r="3.35"/><circle cx="1858.5" cy="1222.0" r="3.35"/><circle cx="1869.0" cy="1222.0" r="3.35"/><circle cx="1879.4" cy="1222.0" r="3.35"/><circle cx="1889.9" cy="1222.0" r="3.35"/><circle cx="1900.4" cy="1000.6" r="3.35"/><circle cx="1910.8" cy="1222.0" r="3.35"/><circle cx="1921.3" cy="1222.0" r="3.35"/><circle cx="1931.8" cy="1222.0" r="3.35"/><circle cx="1942.2" cy="1222.0" r="3.35"/><circle cx="1952.7" cy="1222.0" r="3.35"/><circle cx="1963.2" cy="1222.0" r="3.35"/><circle cx="1973.6" cy="1222.0" r="3.35"/><circle cx="1984.1" cy="1222.0" r="3.35"/><circle cx="1994.5" cy="1222.0" r="3.35"/><circle cx="2005.0" cy="1222.0" r="3.35"/><circle cx="2015.5" cy="1222.0" r="3.35"/><circle cx="2025.9" cy="1222.0" r="3.35"/><circle cx="2036.4" cy="1222.0" r="3.35"/><circle cx="2046.9" cy="1222.0" r="3.35"/><circle cx="2057.3" cy="1000.6" r="3.35"/><circle cx="2067.8" cy="1222.0" r="3.35"/><circle cx="2078.2" cy="1222.0" r="3.35"/></g>
</svg>
<i class="dot" style="left:69.8px;top:781.7px;width:18.4px;height:18.4px;background:#d6538a"></i><i class="dot" style="left:1102.4px;top:781.6px;width:18.4px;height:18.4px;background:#d6538a"></i><i class="dot" style="left:1459.8px;top:781.6px;width:18.4px;height:18.4px;background:#4672a9"></i><i class="dot" style="left:69.7px;top:1267.7px;width:18.4px;height:18.4px;background:#d6538a"></i><i class="dot" style="left:427.1px;top:1267.7px;width:18.4px;height:18.4px;background:#4672a9"></i><i class="dot" style="left:1102.4px;top:1267.7px;width:18.4px;height:18.4px;background:#d6538a"></i>
<svg style="position:absolute;left:340.30px;top:389.10px" width="26" height="26" viewBox="-13 -13 26 26" fill="none" stroke="#1d2130" stroke-width="1.45"><circle r="9.85"/><circle cx="-0.05" cy="-4.8" r="1.3" fill="#1d2130" stroke="none"/><path d="M-3.2 -0.85H0.05V5.3H2.9"/></svg><svg style="position:absolute;left:1553.10px;top:389.10px" width="26" height="26" viewBox="-13 -13 26 26" fill="none" stroke="#1d2130" stroke-width="1.45"><circle r="9.85"/><circle cx="-0.05" cy="-4.8" r="1.3" fill="#1d2130" stroke="none"/><path d="M-3.2 -0.85H0.05V5.3H2.9"/></svg><svg style="position:absolute;left:379.50px;top:874.70px" width="26" height="26" viewBox="-13 -13 26 26" fill="none" stroke="#1d2130" stroke-width="1.45"><circle r="9.85"/><circle cx="-0.05" cy="-4.8" r="1.3" fill="#1d2130" stroke="none"/><path d="M-3.2 -0.85H0.05V5.3H2.9"/></svg><svg style="position:absolute;left:1424.70px;top:874.70px" width="26" height="26" viewBox="-13 -13 26 26" fill="none" stroke="#1d2130" stroke-width="1.45"><circle r="9.85"/><circle cx="-0.05" cy="-4.8" r="1.3" fill="#1d2130" stroke="none"/><path d="M-3.2 -0.85H0.05V5.3H2.9"/></svg>
<div id="txt" style="position:absolute;left:0;top:0;width:2189px;height:1296px;will-change:transform">
<span class="t" style="left:1237.3px;top:34.0px;font-size:26.5px;color:#1d202b;letter-spacing:-0.36px;">Last 15 minutes</span><span class="t" style="left:1801.4px;top:34.1px;font-size:26.5px;color:#2668b2;letter-spacing:-0.14px;">Show dates</span><span class="t" style="left:2043.9px;top:30.3px;font-size:31.4px;color:#ffffff;transform:scaleX(0.9412);transform-origin:0 0;-webkit-text-stroke:0.6px #ffffff;">Refresh</span><span class="t" style="left:11.0px;top:103.7px;font-size:33.8px;color:#2b2e38;letter-spacing:-0.13px;">Elastic-MBP</span><span class="t" style="left:69.8px;top:210.4px;font-size:26px;color:#2f323c;letter-spacing:0.16px;">Status</span><span class="t" style="left:498.3px;top:210.4px;font-size:26px;color:#2f323c;letter-spacing:0.26px;">Transport Address</span><span class="t" style="left:497.4px;top:247.9px;font-size:21.6px;color:#000;font-weight:700;letter-spacing:-0.29px;">localhost:5601</span><span class="t" style="left:1053.3px;top:210.4px;font-size:26px;color:#2f323c;letter-spacing:-0.26px;">OS Free Memory</span><span class="t" style="left:1054.6px;top:247.9px;font-size:21.6px;color:#000;font-weight:700;letter-spacing:-0.72px;">311.8 MB</span><span class="t" style="left:1588.5px;top:210.4px;font-size:26px;color:#2f323c;letter-spacing:0.04px;">Version</span><span class="t" style="left:1588.9px;top:247.9px;font-size:21.6px;color:#000;font-weight:700;letter-spacing:0.15px;">8.0.0</span><span class="t" style="left:2012.1px;top:210.4px;font-size:26px;color:#2f323c;letter-spacing:0.42px;">Uptime</span><span class="t" style="left:2012.5px;top:247.9px;font-size:21.6px;color:#000;font-weight:700;letter-spacing:-0.53px;">19 minutes</span><span class="t" style="left:100.4px;top:249.7px;font-size:21.6px;color:#000;font-weight:700;letter-spacing:-0.45px;">Green</span><span class="t" style="left:70.0px;top:383.9px;font-size:36.6px;color:#1a1c21;letter-spacing:-0.21px;-webkit-text-stroke:0.9px #1a1c21;">Client Requests</span><span class="t" style="left:1102.8px;top:383.9px;font-size:36.6px;color:#1a1c21;letter-spacing:-0.27px;-webkit-text-stroke:0.9px #1a1c21;">Client Response Time (ms)</span><span class="t" style="left:69.1px;top:869.6px;font-size:36.6px;color:#1a1c21;letter-spacing:-0.36px;-webkit-text-stroke:0.9px #1a1c21;">Memory Size (GB)</span><span class="t" style="left:1100.8px;top:869.6px;font-size:36.6px;color:#1a1c21;-webkit-text-stroke:0.9px #1a1c21;">HTTP Connections</span><span class="t" style="left:93.9px;top:780.3px;font-size:22px;color:#23262f;letter-spacing:0.04px;">Client Requests</span><span class="t" style="left:264.2px;top:780.3px;font-size:22px;color:#23262f;">8</span><span class="t" style="left:1126.7px;top:780.3px;font-size:22px;color:#23262f;letter-spacing:0.22px;">Max</span><span class="t" style="left:1183.5px;top:780.3px;font-size:22px;color:#23262f;letter-spacing:0.02px;">38 ms</span><span class="t" style="left:1484.4px;top:780.3px;font-size:22px;color:#23262f;letter-spacing:-0.28px;">Average</span><span class="t" style="left:1578.3px;top:780.3px;font-size:22px;color:#23262f;letter-spacing:-0.40px;">19.75 ms</span><span class="t" style="left:93.7px;top:1266.4px;font-size:22px;color:#23262f;letter-spacing:-0.04px;">Heap Size Limit</span><span class="t" style="left:261.9px;top:1266.4px;font-size:22px;color:#23262f;letter-spacing:-0.68px;">8.0 GB</span><span class="t" style="left:450.9px;top:1266.4px;font-size:22px;color:#23262f;letter-spacing:0.12px;">Memory Size</span><span class="t" style="left:594.0px;top:1266.4px;font-size:22px;color:#23262f;letter-spacing:-0.36px;">712.2 MB</span><span class="t" style="left:1126.2px;top:1266.4px;font-size:22px;color:#23262f;letter-spacing:0.12px;">HTTP Connections</span><span class="t" style="left:1327.5px;top:1266.4px;font-size:22px;color:#23262f;">0</span><span class="t" style="left:72.6px;top:449.9px;font-size:23.5px;color:#9a9a9a;letter-spacing:1.33px;">40</span><span class="t" style="left:72.6px;top:517.6px;font-size:23.5px;color:#9a9a9a;letter-spacing:1.33px;">30</span><span class="t" style="left:72.0px;top:587.1px;font-size:23.5px;color:#9a9a9a;letter-spacing:1.93px;">20</span><span class="t" style="left:73.0px;top:656.6px;font-size:23.5px;color:#9a9a9a;letter-spacing:0.93px;">10</span><span class="t" style="left:87.0px;top:726.1px;font-size:23.5px;color:#9a9a9a;">0</span><span class="t" style="left:174.1px;top:746.5px;font-size:23.5px;color:#9a9a9a;letter-spacing:0.12px;">12:54</span><span class="t" style="left:299.1px;top:746.5px;font-size:23.5px;color:#9a9a9a;letter-spacing:0.12px;">12:56</span><span class="t" style="left:425.8px;top:746.5px;font-size:23.5px;color:#9a9a9a;letter-spacing:0.12px;">12:58</span><span class="t" style="left:551.9px;top:746.5px;font-size:23.5px;color:#9a9a9a;letter-spacing:0.37px;">13:00</span><span class="t" style="left:678.6px;top:746.5px;font-size:23.5px;color:#9a9a9a;letter-spacing:0.62px;">13:02</span><span class="t" style="left:805.4px;top:746.5px;font-size:23.5px;color:#9a9a9a;letter-spacing:0.37px;">13:04</span><span class="t" style="left:930.2px;top:746.5px;font-size:23.5px;color:#9a9a9a;letter-spacing:0.37px;">13:06</span><span class="t" style="left:1103.9px;top:449.9px;font-size:23.5px;color:#9a9a9a;letter-spacing:0.29px;">1000 ms</span><span class="t" style="left:1115.6px;top:517.6px;font-size:23.5px;color:#9a9a9a;letter-spacing:0.62px;">750 ms</span><span class="t" style="left:1116.6px;top:587.1px;font-size:23.5px;color:#9a9a9a;letter-spacing:0.42px;">500 ms</span><span class="t" style="left:1115.6px;top:656.6px;font-size:23.5px;color:#9a9a9a;letter-spacing:0.62px;">250 ms</span><span class="t" style="left:1144.1px;top:726.1px;font-size:23.5px;color:#9a9a9a;letter-spacing:0.24px;">0 ms</span><span class="t" style="left:1262.4px;top:746.5px;font-size:23.5px;color:#9a9a9a;letter-spacing:0.12px;">12:54</span><span class="t" style="left:1380.2px;top:746.5px;font-size:23.5px;color:#9a9a9a;letter-spacing:0.12px;">12:56</span><span class="t" style="left:1497.9px;top:746.5px;font-size:23.5px;color:#9a9a9a;letter-spacing:0.12px;">12:58</span><span class="t" style="left:1617.0px;top:746.5px;font-size:23.5px;color:#9a9a9a;letter-spacing:0.37px;">13:00</span><span class="t" style="left:1734.8px;top:746.5px;font-size:23.5px;color:#9a9a9a;letter-spacing:0.62px;">13:02</span><span class="t" style="left:1852.8px;top:746.5px;font-size:23.5px;color:#9a9a9a;letter-spacing:0.37px;">13:04</span><span class="t" style="left:1970.8px;top:746.5px;font-size:23.5px;color:#9a9a9a;letter-spacing:0.37px;">13:06</span><span class="t" style="left:70.8px;top:935.1px;font-size:23.5px;color:#9a9a9a;">9.3 GB</span><span class="t" style="left:70.8px;top:989.9px;font-size:23.5px;color:#9a9a9a;">7.5 GB</span><span class="t" style="left:70.8px;top:1045.3px;font-size:23.5px;color:#9a9a9a;">5.6 GB</span><span class="t" style="left:70.8px;top:1100.6px;font-size:23.5px;color:#9a9a9a;">3.7 GB</span><span class="t" style="left:70.8px;top:1155.9px;font-size:23.5px;color:#9a9a9a;">1.9 GB</span><span class="t" style="left:89.1px;top:1211.3px;font-size:23.5px;color:#9a9a9a;">0.0 B</span><span class="t" style="left:211.7px;top:1232.7px;font-size:23.5px;color:#9a9a9a;letter-spacing:0.12px;">12:54</span><span class="t" style="left:333.1px;top:1232.7px;font-size:23.5px;color:#9a9a9a;letter-spacing:0.12px;">12:56</span><span class="t" style="left:452.9px;top:1232.7px;font-size:23.5px;color:#9a9a9a;letter-spacing:0.12px;">12:58</span><span class="t" style="left:573.4px;top:1232.7px;font-size:23.5px;color:#9a9a9a;letter-spacing:0.37px;">13:00</span><span class="t" style="left:694.8px;top:1232.7px;font-size:23.5px;color:#9a9a9a;letter-spacing:0.62px;">13:02</span><span class="t" style="left:814.8px;top:1232.7px;font-size:23.5px;color:#9a9a9a;letter-spacing:0.37px;">13:04</span><span class="t" style="left:935.5px;top:1232.7px;font-size:23.5px;color:#9a9a9a;letter-spacing:0.37px;">13:06</span><span class="t" style="left:1104.6px;top:935.3px;font-size:23.5px;color:#9a9a9a;">2.5</span><span class="t" style="left:1125.2px;top:990.1px;font-size:23.5px;color:#9a9a9a;">2</span><span class="t" style="left:1104.6px;top:1045.5px;font-size:23.5px;color:#9a9a9a;">1.5</span><span class="t" style="left:1125.2px;top:1100.8px;font-size:23.5px;color:#9a9a9a;">1</span><span class="t" style="left:1104.6px;top:1156.1px;font-size:23.5px;color:#9a9a9a;">0.5</span><span class="t" style="left:1124.2px;top:1211.5px;font-size:23.5px;color:#9a9a9a;">0</span><span class="t" style="left:1210.8px;top:1232.7px;font-size:23.5px;color:#9a9a9a;letter-spacing:0.12px;">12:54</span><span class="t" style="left:1337.3px;top:1232.7px;font-size:23.5px;color:#9a9a9a;letter-spacing:0.12px;">12:56</span><span class="t" style="left:1462.6px;top:1232.7px;font-size:23.5px;color:#9a9a9a;letter-spacing:0.12px;">12:58</span><span class="t" style="left:1586.8px;top:1232.7px;font-size:23.5px;color:#9a9a9a;letter-spacing:0.37px;">13:00</span><span class="t" style="left:1713.4px;top:1232.7px;font-size:23.5px;color:#9a9a9a;letter-spacing:0.62px;">13:02</span><span class="t" style="left:1838.3px;top:1232.7px;font-size:23.5px;color:#9a9a9a;letter-spacing:0.37px;">13:04</span><span class="t" style="left:1964.5px;top:1232.7px;font-size:23.5px;color:#9a9a9a;letter-spacing:0.37px;">13:06</span>
</div>
</div>
</body></html>
